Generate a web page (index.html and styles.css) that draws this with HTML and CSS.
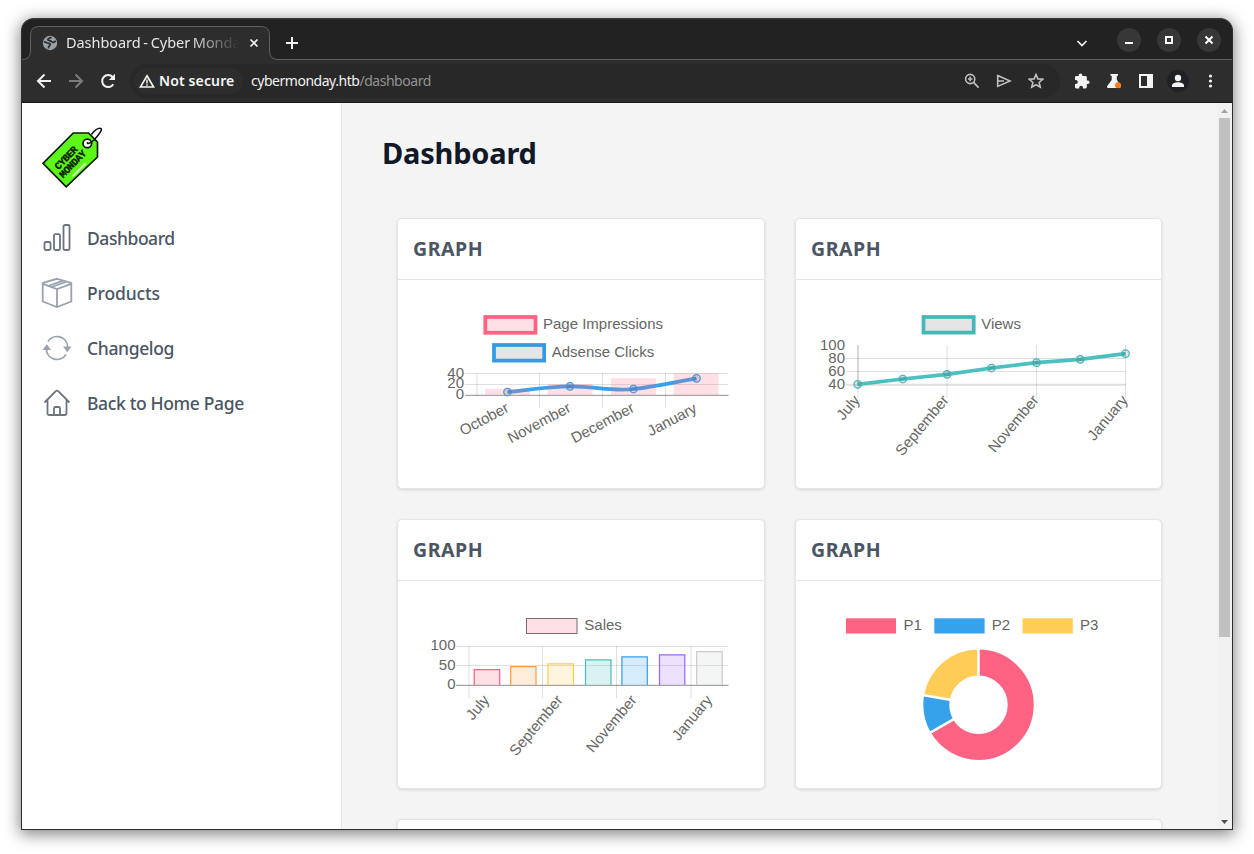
FILE: index.html
```html
<!DOCTYPE html>
<html lang="en">
<head>
<meta charset="utf-8">
<title>Dashboard - Cyber Monday</title>
<link rel="stylesheet" href="styles.css">
</head>
<body>
<div class="window">
  <header class="tabstrip">
    <svg class="tab-outline" viewBox="22 19 1210 41"><path d="M21 59.5H22Q30.5 59.5 30.5 51V35Q30.5 26.5 39 26.5H261Q269.500 26.500 269.500 35V51Q269.500 59.500 278 59.500H1234V62H21Z"/></svg>
    <div class="tab">
      <svg class="globe" viewBox="0 0 16 16"><circle cx="8" cy="8" r="7.200" fill="#9aa0a6"/><path d="M2 6.800C4 7.200 4.800 8.300 6.500 8.300S8.500 9 8 10.200 6 11.500 6.500 13.500M9.500 2C8.500 3.300 5.800 3 5.800 4.500S8 5.200 9 6.200s2 1.600 3 .8 1.300-.5 2-.5" fill="none" stroke="#2d2d2d" stroke-width="1.700"/></svg>
      <span class="tab-title">Dashboard - Cyber Monday</span>
      <svg class="tab-close" viewBox="0 0 10 10"><path d="M1.500 1.500l7 7M8.500 1.500l-7 7"/></svg>
    </div>
    <svg class="plus" viewBox="0 0 12 12"><path d="M6 0v12M0 6h12"/></svg>
    <div class="window-controls">
      <svg class="chev" viewBox="0 0 12 12"><path d="M1.500 4L6 8.500 10.500 4"/></svg>
      <span class="round"><svg viewBox="0 0 24 24"><path d="M8 15h8"/></svg></span>
      <span class="round"><svg viewBox="0 0 24 24"><path d="M9 9h6v6H9z"/></svg></span>
      <span class="round"><svg viewBox="0 0 24 24"><path d="M8.500 8.500l7 7M15.500 8.500l-7 7"/></svg></span>
    </div>
  </header>
  <div class="toolbar">
    <svg class="nav" viewBox="0 0 16 16"><path d="M15 8H2M8.500 1.500L2 8l6.500 6.500"/></svg>
    <svg class="nav dim" viewBox="0 0 16 16"><path d="M1 8h13M7.500 1.500L14 8l-6.500 6.500"/></svg>
    <svg class="nav" viewBox="0 0 16 16"><path d="M13.300 11.200A6 6 0 1 1 12.600 4"/><path d="M15 .8V7H8.800z" fill="#f1f1f1" stroke="none"/></svg>
    <div class="omnibox">
      <span class="chip"><svg class="warn" viewBox="0 0 16 14"><path d="M8 1.800L14.600 13H1.400z" fill="none" stroke="#f1f1f1" stroke-width="1.700"/><path d="M8 5.500v4M8 10.300v1.500" stroke="#f1f1f1" stroke-width="1.500"/></svg><b>Not secure</b></span>
      <span class="url">cybermonday.htb<i>/dashboard</i></span>
      <span class="omni-icons">
        <svg viewBox="0 0 16 16"><circle cx="6.200" cy="6" r="4.600"/><path d="M9.600 9.400l5 5.200M4 6h4.400M6.200 3.800v4.400"/></svg>
        <svg viewBox="0 0 16 16"><path d="M1.700 2.600L14 8 1.700 13.400zM2 8h6"/></svg>
        <svg viewBox="0 0 16 16"><path d="M8 1.500l1.900 4.400 4.900.4-3.700 3.200 1.200 4.700L8 11.700l-4.300 2.500 1.200-4.700L1.200 6.300l4.900-.4z"/></svg>
      </span>
    </div>
    <div class="actions">
      <svg viewBox="0 0 16 16"><path d="M13.800 7.500h-1V4.300c0-.8-.6-1.400-1.400-1.400H8.300V2.300a1.800 1.800 0 0 0-3.600 0v.6H2.400C1.600 2.900 1 3.500 1 4.300v2.800h.8a2 2 0 0 1 0 4H1v2.900c0 .8.600 1.400 1.400 1.400h2.800v-.8a1.900 1.900 0 0 1 3.800 0v.8h2.400c.8 0 1.400-.6 1.400-1.400v-2.900h1a1.800 1.800 0 0 0 0-3.600z"/></svg>
      <svg viewBox="0 0 16 16"><path d="M4.500 1h7.500v1.800h-1.200v4l4 6.700-.8 1.500H1.500l-.6-1.500L5.700 7V2.800H4.500z"/><circle cx="12" cy="12.300" r="3" fill="#ff7b15"/></svg>
      <svg viewBox="0 0 16 16"><path fill-rule="evenodd" d="M1 1h14v14H1zM3 3v10h6V3z"/></svg>
      <span class="avatar"><svg viewBox="0 0 16 16"><circle cx="8" cy="5" r="3.200"/><path d="M2 14v-1.500C2 10 5.500 9.200 8 9.200s6 .8 6 3.300V14z"/></svg></span>
      <svg viewBox="0 0 16 16"><circle cx="8.500" cy="3" r="1.600"/><circle cx="8.500" cy="8" r="1.600"/><circle cx="8.500" cy="13" r="1.600"/></svg>
    </div>
  </div>
  <div class="page">
    <aside class="sidebar">
      <svg class="logo" viewBox="42 127 62 62">
        <path d="M43 163.300L73.300 133H88.500L97.500 142.200V157L66.200 186.800Z" fill="#5cf716" stroke="#0a1a02" stroke-width="1.700"/>
        <path d="M72.500 176.500L85.500 163.500" stroke="#e8ffe0" stroke-width="1.600"/>
        <circle cx="87.300" cy="143.400" r="4.300" fill="#fff" stroke="#111" stroke-width="1.700"/>
        <path d="M88 142.500C86 144 90 144 94 140 100 134 103 128.500 100.500 128.300 98 128 94 131 91.500 134.500" fill="none" stroke="#111" stroke-width="1.600"/>
        <g class="logo-text"><text transform="translate(58.500 170.300) rotate(-46)">CYBER</text><text transform="translate(63.300 178.400) rotate(-46)">MONDAY</text></g>
      </svg>
      <nav class="menu">
        <a><svg viewBox="0 0 32 32" class="dark"><rect x="3.500" y="20" width="6" height="8" rx="1.500"/><rect x="13" y="12.200" width="6" height="15.800" rx="1.500"/><rect x="22.500" y="3" width="6" height="25" rx="1.500"/></svg><span class="w-dash">Dashboard</span></a>
        <a><svg viewBox="0 0 32 32"><path d="M16 1.800L30.300 6V24.500L16 30 1.700 24.500V6zM1.700 6.800L16 12 30.300 6.800M16 12v18M7 9l15.500-5.400M10.500 10L25 5"/></svg><span class="w-prod">Products</span></a>
        <a><svg viewBox="0 0 32 32"><path d="M7 9.500A10.700 10.700 0 0 1 26.700 15M25 22.500A10.700 10.700 0 0 1 5.300 17"/><path d="M22 14.500h8.500L26.200 20.300zM1.500 18h8.500L5.800 12.200z" fill="#9aa1af" stroke="none"/></svg><span>Changelog</span></a>
        <a><svg viewBox="0 0 32 32" class="dark"><path d="M3.500 15.500L14.800 4.200Q16 3 17.200 4.200L28.500 15.500M6.500 13V26.500Q6.500 28 8 28H24Q25.500 28 25.500 26.500V13M13 28V21.500Q13 20 14.500 20H17.500Q19 20 19 21.500V28"/></svg><span>Back to Home Page</span></a>
      </nav>
    </aside>
    <main class="main">
      <h1>Dashboard</h1>
      <div class="cards">
        <section class="card"><h2>GRAPH</h2>
          <svg class="chart" viewBox="398 280 366 208">
            <g class="grid"><path d="M465 373.500H728.500M465 384.500H728.500M477 373V396M539.500 373V408M602.500 373V408M665.500 373V408"/><path class="base" d="M465 395.300H728.500"/></g>
            <g class="swatch"><rect x="485.300" y="317" width="50.200" height="15.800" fill="#ffe0e6" stroke="#ff6384"/><rect x="494" y="345" width="50.200" height="15.600" fill="#e5e5e5" stroke="#359be0"/></g>
            <text x="543" y="329">Page Impressions</text><text x="551.700" y="357">Adsense Clicks</text>
            <g class="end"><text x="464" y="378">40</text><text x="464" y="388">20</text><text x="464" y="399">0</text>
            <text transform="translate(510 411) rotate(-28)">October</text><text transform="translate(572 411) rotate(-28)">November</text><text transform="translate(635.500 411) rotate(-28)">December</text><text transform="translate(698 411.500) rotate(-28)">January</text></g>
            <path class="line" stroke="#36a2eb" d="M507.500 392C530 390 545 386.500 570 386.300S610 391.500 633.500 389 675 382 696.500 378.300"/>
            <g fill="#ff6384" opacity=".2"><path d="M485 388.700h45v6h-45zM547.500 384h45v11h-45zM611 378.300h45v16.700h-45zM673.700 373h45v22h-45z"/></g>
            <g class="dots" stroke="#4795dc"><circle cx="507.500" cy="392" r="3.750"/><circle cx="570" cy="386.300" r="3.750"/><circle cx="633.500" cy="389" r="3.750"/><circle cx="696.500" cy="378.300" r="3.750"/></g>
          </svg></section>
        <section class="card"><h2>GRAPH</h2>
          <svg class="chart" viewBox="796 280 365 208">
            <g class="grid"><path d="M846 358.500H1126M846 371.500H1126M947 345V398M1036.500 345V398M1125.500 345V398M858 385V398"/><path d="M846 384.800H1126" stroke-width="2"/><path class="base light" d="M858 345V385"/></g>
            <g class="swatch"><rect x="923.500" y="317" width="50.200" height="15.600" fill="#e5e5e5" stroke="#48b7b7"/></g>
            <text x="981.200" y="329">Views</text>
            <g class="end"><text x="845" y="349.500">100</text><text x="845" y="363">80</text><text x="845" y="376">60</text><text x="845" y="389">40</text>
            <text transform="translate(860.500 400.500) rotate(-50)">July</text><text transform="translate(949.500 400.500) rotate(-50)">September</text><text transform="translate(1039.500 400.500) rotate(-50)">November</text><text transform="translate(1128.500 400.500) rotate(-50)">January</text></g>
            <path class="line" stroke="#4bc0c0" d="M857.700 384.300L902.800 379 947 374.300 991.500 368 1036.500 362.700 1080.300 359.300 1125.500 353.700"/>
            <g class="dots" stroke="#43b5b5"><circle cx="857.700" cy="384.300" r="3.750"/><circle cx="902.800" cy="379" r="3.750"/><circle cx="947" cy="374.300" r="3.750"/><circle cx="991.500" cy="368" r="3.750"/><circle cx="1036.500" cy="362.700" r="3.750"/><circle cx="1080.300" cy="359.300" r="3.750"/><circle cx="1125.500" cy="353.700" r="3.750"/></g>
          </svg></section>
        <section class="card"><h2>GRAPH</h2>
          <svg class="chart" viewBox="398 581 366 207">
            <g class="grid"><path d="M456 646.500H728.500M456 665.500H728.500M469 646V698M542.500 646V698M616.500 646V698M691 646V698"/><path class="base" d="M456 685.300H728.500"/></g>
            <rect x="526.500" y="618.500" width="50.500" height="15" fill="#ffe0e6" stroke="#776a6d"/>
            <text x="584.300" y="630">Sales</text>
            <g class="end"><text x="455.500" y="650">100</text><text x="455.500" y="670">50</text><text x="455.500" y="689">0</text>
            <text transform="translate(490 700.500) rotate(-50)">July</text><text transform="translate(563.500 700.500) rotate(-50)">September</text><text transform="translate(637.500 700.500) rotate(-50)">November</text><text transform="translate(713 700.500) rotate(-50)">January</text></g>
            <g class="bars"><path d="M474.200 685V669.700H499.700V685" fill="#ff6384" stroke="#ff6384"/><path d="M510.700 685V666.500H536V685" fill="#ff9f40" stroke="#ff9f40"/><path d="M547.900 685V663.800H573.500V685" fill="#ffcd56" stroke="#ffcd56"/><path d="M585.500 685V659.900H611V685" fill="#4bc0c0" stroke="#4bc0c0"/><path d="M621.900 685V656.900H647.300V685" fill="#36a2eb" stroke="#36a2eb"/><path d="M659.500 685V654.900H684.800V685" fill="#9966ff" stroke="#9966ff"/><path d="M696.700 685V651.600H722.200V685" fill="#c9cbcf" stroke="#c9cbcf"/></g>
          </svg></section>
        <section class="card"><h2>GRAPH</h2>
          <svg class="chart" viewBox="796 581 365 207">
            <rect x="846" y="618.300" width="50" height="15.200" fill="#ff6384"/><rect x="934.300" y="618.300" width="50.300" height="15.200" fill="#36a2eb"/><rect x="1022.500" y="618.300" width="50.300" height="15.200" fill="#ffcd56"/>
            <text x="903.500" y="630">P1</text><text x="991.800" y="630">P2</text><text x="1080" y="630">P3</text>
            <g transform="translate(978.500 704.800) rotate(-90)" fill="none" stroke-width="26"><circle r="42.200" pathLength="360" stroke="#ff6384" stroke-dasharray="240 120"/><circle r="42.200" pathLength="360" stroke="#36a2eb" stroke-dasharray="40 320" stroke-dashoffset="-240"/><circle r="42.200" pathLength="360" stroke="#ffcd56" stroke-dasharray="80 280" stroke-dashoffset="-280"/><path d="M0 0H57M0 0L-28.500 -49.400M0 0L9.900 -56.100" stroke="#fff" stroke-width="2.500"/></g>
          </svg></section>
        <section class="card wide"></section>
      </div>
    </main>
    <div class="scrollbar"><svg viewBox="0 0 15 15"><path d="M4 10h7L7.500 6z" fill="#a3a3a3"/></svg><span class="thumb"></span><svg viewBox="0 0 15 15"><path d="M4 6h7L7.500 10z" fill="#505050"/></svg></div>
  </div>
</div>
</body>
</html>
```
FILE: styles.css
```css
* { box-sizing: border-box; }
body { margin: 0; width: 1254px; height: 854px; overflow: hidden; background: #fff; padding: 18px 21px; font-family: "Noto Sans", sans-serif; }
svg { display: block; flex: none; }
.window { width: 1212px; height: 812px; border: 1px solid #2d2d2d; border-top-color: #373737; border-radius: 13px 13px 0 0; overflow: hidden; background: #222; box-shadow: 0 3px 16px 1px rgba(0,0,0,.5); display: flex; flex-direction: column; }

.tabstrip { position: relative; height: 41px; flex: none; display: flex; align-items: center; padding-left: 20px; border-top: 1px solid #2c2c2c; }
.tab-outline { position: absolute; left: 0; top: -1px; width: 1210px; height: 41px; }
.tab-outline path { fill: #2d2d2d; stroke: #606060; }
.tab { position: relative; display: flex; align-items: center; width: 218px; margin-top: 6px; }
.globe { width: 16px; height: 16px; margin-right: 8px; }
.tab-title { width: 173px; height: 20px; margin-top: -2px; overflow: hidden; white-space: nowrap; font-size: 14.500px; line-height: 20px; letter-spacing: -.05px; word-spacing: -1px; color: #e6e6e6; -webkit-mask-image: linear-gradient(90deg, #000 125px, transparent 173px); mask-image: linear-gradient(90deg, #000 125px, transparent 173px); }
.tab-close { width: 10px; height: 10px; margin-left: 10px; }
.tab-close path, .plus path, .chev path { fill: none; stroke: #f2f2f2; stroke-width: 1.700; }
.plus { position: relative; width: 12px; height: 12px; margin: 6px 0 0 26px; }
.plus path { stroke-width: 2; }
.window-controls { position: relative; margin-left: auto; margin-right: 11px; display: flex; align-items: center; gap: 16px; }
.chev { width: 12px; height: 12px; margin-right: 13px; margin-top: 5px; }
.round { width: 24px; height: 24px; border-radius: 50%; background: #373737; }
.round path { fill: none; stroke: #fff; stroke-width: 2; }

.toolbar { height: 43px; flex: none; display: flex; align-items: center; padding: 0 14px; background: #2d2d2d; border-bottom: 1px solid #191919; }
.nav { width: 16px; height: 16px; margin-right: 16px; fill: none; stroke: #f1f1f1; stroke-width: 2; }
.nav.dim { stroke: #7d7d7d; }
.omnibox { width: 930px; height: 34px; margin-left: -2px; border-radius: 17px; background: #282828; display: flex; align-items: center; padding: 0 16px 0 4px; }
.chip { height: 26px; width: 109px; border-radius: 13px; background: #2d2d2d; display: flex; align-items: center; padding-left: 5px; color: #f5f5f5; font-size: 14px; }
.chip b { font-weight: 600; letter-spacing: .13px; white-space: nowrap; padding-bottom: 2px; }
.warn { width: 16px; height: 14px; margin-right: 4px; }
.url { margin-left: 8px; padding-bottom: 2px; font-size: 14px; letter-spacing: -.47px; color: #f1f1f1; }
.url i { font-style: normal; color: #929292; }
.omni-icons { margin-left: auto; display: flex; gap: 16px; }
.omni-icons svg { width: 16px; height: 16px; fill: none; stroke: #c0c0c0; stroke-width: 1.600; }
.actions { display: flex; align-items: center; gap: 16px; margin-left: 14px; }
.actions svg { width: 16px; height: 16px; fill: #f4f4f4; }
.avatar { width: 22px; height: 22px; margin: 0 -3px; border-radius: 50%; background: #202124; display: grid; place-items: center; }

.page { flex: 1; display: flex; min-height: 0; background: #f4f4f4; }
.sidebar { width: 320px; background: #fff; border-right: 1px solid #e5e7eb; padding: 24px 19px; }
.logo { width: 62px; height: 62px; margin-left: 1px; }
.logo-text { font: bold 10px "Liberation Mono", monospace; letter-spacing: -.4px; fill: #0a1a02; stroke: #0a1a02; stroke-width: .35px; }
.menu { margin-top: 21px; }
.menu a { display: flex; align-items: center; height: 55px; gap: 14px; color: #4b5563; font-size: 17.500px; font-weight: 500; letter-spacing: -.35px; }
.menu span { padding-top: 1px; }
.menu .w-dash { letter-spacing: -.45px; }
.menu .w-prod { letter-spacing: -.15px; }
.menu svg { width: 32px; height: 32px; fill: none; stroke: #9aa1af; stroke-width: 1.800; }
.menu svg.dark { stroke: #6b7280; }

.main { width: 876px; overflow: hidden; padding: 28px 0 0 40px; }
h1 { margin: 0; height: 87px; font-size: 29px; line-height: 44px; font-weight: 700; letter-spacing: -.2px; color: #111827; }
.cards { margin-left: 15px; display: grid; grid-template-columns: 368px 367px; grid-auto-rows: 271px 270px; gap: 30px; }
.card { height: 271px; background: #fff; border: 1px solid #e5e5e5; border-radius: 5px; box-shadow: 0 1px 3px rgba(0,0,0,.12); }
.card:nth-child(3), .card:nth-child(4) { height: 270px; }
.card.wide { grid-column: 1 / 3; }
h2 { margin: 0; height: 61px; padding-left: 15px; border-bottom: 1px solid #e5e5e5; line-height: 60px; font-size: 19.500px; font-weight: 700; letter-spacing: .55px; color: #4b5563; }
.chart { width: 100%; }
.chart text { font: 15px "Liberation Sans", Arial, sans-serif; fill: #666; }
.end { text-anchor: end; }
.grid path { fill: none; stroke: #000; stroke-opacity: .12; }
.grid path.base { stroke-opacity: .35; stroke-width: 1.250; }
.grid path.base.light { stroke-opacity: .25; }
.swatch rect { stroke-width: 3.750; }
.line { fill: none; stroke-width: 3.750; }
.dots circle { fill: rgba(0,0,0,.1); stroke-width: 1.250; }
.bars path { fill-opacity: .2; stroke-width: 1.250; }

.scrollbar { width: 15px; margin-left: -1px; background: #f1f1f1; display: flex; flex-direction: column; align-items: center; }
.scrollbar svg { width: 15px; height: 15px; }
.thumb { width: 11px; height: 519px; background: #c1c1c1; margin-bottom: auto; }
```
